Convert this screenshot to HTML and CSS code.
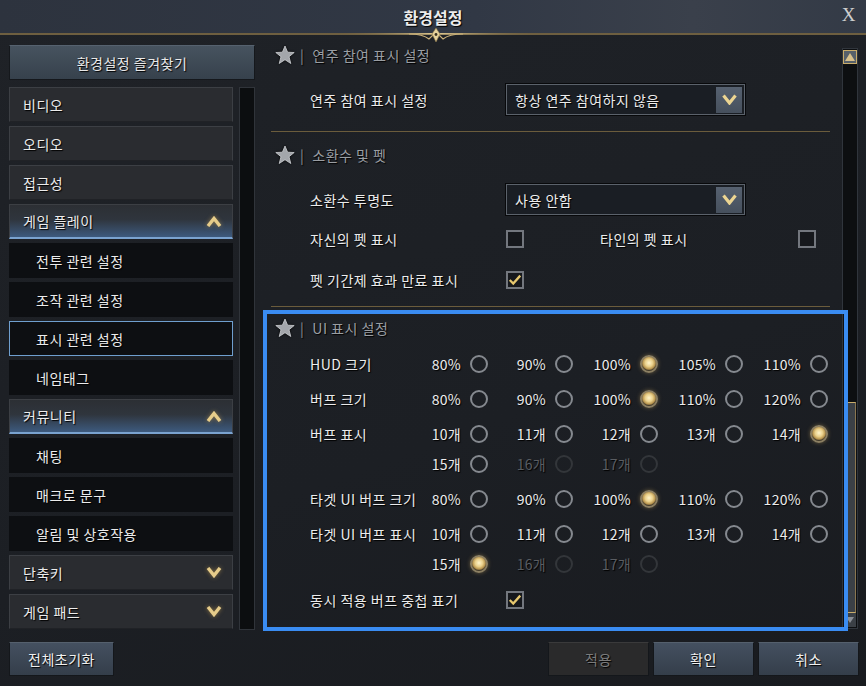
FILE: index.html
```html
<!DOCTYPE html>
<html>

<head>
    <link rel="stylesheet" href="styles.css">
    <title>환경설정</title>
</head>

<body>
    <div class="window">
        <div class="titlebar">
            <span class="title">환경설정</span>
            <span class="close">X</span>
        </div>
        <svg class="ornament" width="210" height="16" viewBox="0 0 210 16">
            <defs>
                <linearGradient id="gl" x1="0" x2="1">
                    <stop offset="0" stop-color="#6b5a38" stop-opacity="0" />
                    <stop offset="0.5" stop-color="#e2cc94" />
                    <stop offset="1" stop-color="#6b5a38" stop-opacity="0" />
                </linearGradient>
            </defs>
            <rect x="0" y="5" width="210" height="1.5" fill="url(#gl)" />
            <path d="M78 6 Q92 6 98 11 L105 4 L112 11 Q118 6 132 6" fill="none" stroke="#c9b07a" stroke-width="1.2" />
            <path d="M105 0 L109 6 L105 14 L101 6 Z" fill="#e6d29c" stroke="#8a7446" stroke-width="0.6" />
            <circle cx="105" cy="6.5" r="1.4" fill="#3a3222" />
        </svg>

        <div class="main">
            <aside class="sidebar">
                <button class="fav-btn">환경설정 즐겨찾기</button>
                <div class="nav-wrap">
                    <ul class="nav">
                        <li class="nav-item">비디오</li>
                        <li class="nav-item">오디오</li>
                        <li class="nav-item">접근성</li>
                        <li class="nav-item open">게임 플레이
                            <svg class="chev" width="16" height="11" viewBox="0 0 16 11"><polyline points="2,10 8,2.5 14,10" /></svg>
                        </li>
                        <li class="nav-sub">전투 관련 설정</li>
                        <li class="nav-sub">조작 관련 설정</li>
                        <li class="nav-sub active">표시 관련 설정</li>
                        <li class="nav-sub">네임태그</li>
                        <li class="nav-item open">커뮤니티
                            <svg class="chev" width="16" height="11" viewBox="0 0 16 11"><polyline points="2,10 8,2.5 14,10" /></svg>
                        </li>
                        <li class="nav-sub">채팅</li>
                        <li class="nav-sub">매크로 문구</li>
                        <li class="nav-sub">알림 및 상호작용</li>
                        <li class="nav-item">단축키
                            <svg class="chev" width="16" height="11" viewBox="0 0 16 11"><polyline points="2,1 8,8.5 14,1" /></svg>
                        </li>
                        <li class="nav-item">게임 패드
                            <svg class="chev" width="16" height="11" viewBox="0 0 16 11"><polyline points="2,1 8,8.5 14,1" /></svg>
                        </li>
                    </ul>
                    <div class="nav-track"></div>
                </div>
            </aside>

            <section class="content">
                <div class="panel">
                    <div class="sec-head">
                        <svg class="star" width="20" height="20" viewBox="0 0 20 20"><polygon points="10,1 12.6,7.2 19.2,7.5 14,11.7 15.8,18.5 10,14.7 4.2,18.5 6,11.7 0.8,7.5 7.4,7.2" /></svg>
                        <span class="bar">|</span> 연주 참여 표시 설정
                    </div>
                    <div class="row row-select r1">
                        <span class="label">연주 참여 표시 설정</span>
                        <div class="select">
                            <span>항상 연주 참여하지 않음</span>
                            <span class="select-btn"><svg width="15" height="11" viewBox="0 0 15 11"><polyline points="1.5,1.5 7.5,9 13.5,1.5" /></svg></span>
                        </div>
                    </div>
                    <div class="sep s1"></div>

                    <div class="sec-head h2">
                        <svg class="star" width="20" height="20" viewBox="0 0 20 20"><polygon points="10,1 12.6,7.2 19.2,7.5 14,11.7 15.8,18.5 10,14.7 4.2,18.5 6,11.7 0.8,7.5 7.4,7.2" /></svg>
                        <span class="bar">|</span> 소환수 및 펫
                    </div>
                    <div class="row row-select r1">
                        <span class="label">소환수 투명도</span>
                        <div class="select">
                            <span>사용 안함</span>
                            <span class="select-btn"><svg width="15" height="11" viewBox="0 0 15 11"><polyline points="1.5,1.5 7.5,9 13.5,1.5" /></svg></span>
                        </div>
                    </div>
                    <div class="row row-check r-pet">
                        <span class="label">자신의 펫 표시</span>
                        <span class="check"></span>
                        <span class="label other">타인의 펫 표시</span>
                        <span class="check"></span>
                    </div>
                    <div class="row row-check r-exp">
                        <span class="label">펫 기간제 효과 만료 표시</span>
                        <span class="check on"><svg width="16" height="14" viewBox="0 0 16 14"><polyline points="2,7 6,11 14,2" /></svg></span>
                    </div>
                    <div class="sep s2"></div>

                    <div class="sec-head h3">
                        <svg class="star" width="20" height="20" viewBox="0 0 20 20"><polygon points="10,1 12.6,7.2 19.2,7.5 14,11.7 15.8,18.5 10,14.7 4.2,18.5 6,11.7 0.8,7.5 7.4,7.2" /></svg>
                        <span class="bar">|</span> UI 표시 설정
                    </div>
                    <div class="opt-list">
                        <div class="opt-row">
                            <span class="label">HUD 크기</span>
                            <div class="opts">
                                <span class="opt">80%<i class="radio"></i></span>
                                <span class="opt">90%<i class="radio"></i></span>
                                <span class="opt">100%<i class="radio on"></i></span>
                                <span class="opt">105%<i class="radio"></i></span>
                                <span class="opt">110%<i class="radio"></i></span>
                            </div>
                        </div>
                        <div class="opt-row">
                            <span class="label">버프 크기</span>
                            <div class="opts">
                                <span class="opt">80%<i class="radio"></i></span>
                                <span class="opt">90%<i class="radio"></i></span>
                                <span class="opt">100%<i class="radio on"></i></span>
                                <span class="opt">110%<i class="radio"></i></span>
                                <span class="opt">120%<i class="radio"></i></span>
                            </div>
                        </div>
                        <div class="opt-row">
                            <span class="label">버프 표시</span>
                            <div class="opts">
                                <span class="opt">10개<i class="radio"></i></span>
                                <span class="opt">11개<i class="radio"></i></span>
                                <span class="opt">12개<i class="radio"></i></span>
                                <span class="opt">13개<i class="radio"></i></span>
                                <span class="opt">14개<i class="radio on"></i></span>
                                <span class="opt">15개<i class="radio"></i></span>
                                <span class="opt off">16개<i class="radio"></i></span>
                                <span class="opt off">17개<i class="radio"></i></span>
                            </div>
                        </div>
                        <div class="opt-row">
                            <span class="label">타겟 UI 버프 크기</span>
                            <div class="opts">
                                <span class="opt">80%<i class="radio"></i></span>
                                <span class="opt">90%<i class="radio"></i></span>
                                <span class="opt">100%<i class="radio on"></i></span>
                                <span class="opt">110%<i class="radio"></i></span>
                                <span class="opt">120%<i class="radio"></i></span>
                            </div>
                        </div>
                        <div class="opt-row">
                            <span class="label">타겟 UI 버프 표시</span>
                            <div class="opts">
                                <span class="opt">10개<i class="radio"></i></span>
                                <span class="opt">11개<i class="radio"></i></span>
                                <span class="opt">12개<i class="radio"></i></span>
                                <span class="opt">13개<i class="radio"></i></span>
                                <span class="opt">14개<i class="radio"></i></span>
                                <span class="opt">15개<i class="radio on"></i></span>
                                <span class="opt off">16개<i class="radio"></i></span>
                                <span class="opt off">17개<i class="radio"></i></span>
                            </div>
                        </div>
                    </div>
                    <div class="row row-check r-stack">
                        <span class="label">동시 적용 버프 중첩 표기</span>
                        <span class="check on"><svg width="16" height="14" viewBox="0 0 16 14"><polyline points="2,7 6,11 14,2" /></svg></span>
                    </div>
                </div>

                <div class="vscroll">
                    <span class="vs-up"><svg width="10" height="8" viewBox="0 0 10 8"><polygon points="5,0 10,8 0,8" /></svg></span>
                    <span class="vs-thumb"></span>
                    <span class="vs-down"><svg width="8" height="6" viewBox="0 0 8 6"><polygon points="0,0 8,0 4,6" /></svg></span>
                </div>
            </section>
        </div>

        <div class="footer">
            <button class="btn reset">전체초기화</button>
            <div class="btn-group">
                <button class="btn disabled">적용</button>
                <button class="btn">확인</button>
                <button class="btn">취소</button>
            </div>
        </div>

        <div class="highlight"></div>
    </div>
</body>

</html>
```

FILE: styles.css
```css
body {
    margin: 0;
    background: #15171b;
    font-family: "Noto Sans CJK KR", "Noto Sans", sans-serif;
    font-size: 14px;
    letter-spacing: 0.5px;
    color: #ececec;
}

.window {
    position: relative;
    width: 866px;
    height: 686px;
    overflow: hidden;
    background: linear-gradient(160deg, #1f2227 0%, #1c1f24 60%, #191b1f 100%);
}

.titlebar {
    height: 33px;
    border-bottom: 2px solid #6e5f40;
    background: linear-gradient(90deg, #2d333e 0%, #313845 55%, #3a404b 80%, #333a46 100%);
    display: flex;
    align-items: center;
    justify-content: center;
    position: relative;
}

.title {
    font-size: 16px;
    font-weight: bold;
    letter-spacing: 0;
    color: #ececec;
    text-shadow: 1px 1px 1px #000;
}

.close {
    position: absolute;
    right: 10px;
    top: 4px;
    font-family: "Liberation Serif", serif;
    font-size: 19px;
    color: #cfcfcf;
}

.ornament {
    position: absolute;
    left: 331px;
    top: 28px;
}

/* main area */
.main {
    box-sizing: border-box;
    height: 596px;
    padding: 10px 8px 0 9px;
    display: flex;
    gap: 10px;
}

.sidebar {
    width: 246px;
    display: flex;
    flex-direction: column;
}

.fav-btn {
    height: 35px;
    border: 1px solid #15181c;
    border-top-color: #56626f;
    background: linear-gradient(#47535f, #36414c);
    color: #e8e8e8;
    font-family: inherit;
    font-size: 14px;
    letter-spacing: 0.5px;
    text-shadow: 1px 1px 1px #000;
    margin-bottom: 7px;
}

.nav-wrap {
    display: flex;
    gap: 6px;
}

.nav {
    list-style: none;
    margin: 0;
    padding: 0;
    width: 224px;
}

.nav li {
    box-sizing: border-box;
    height: 35px;
    margin-bottom: 4px;
    display: flex;
    align-items: center;
    justify-content: space-between;
    text-shadow: 1px 1px 1px #000;
}

.nav li:last-child {
    margin-bottom: 0;
}

.nav-item {
    padding: 0 10px 0 13px;
    background: #2a2c30;
    border: 1px solid #3c3f44;
    border-bottom-color: #202226;
}

.nav-item.open {
    background: linear-gradient(#2c2f34 0%, #2f353d 45%, #3d5a7e 100%);
    border-bottom: 2px solid #7aa3d0;
}

.nav-sub {
    padding-left: 26px;
    background: #0d0f12;
    border: 1px solid #0d0f12;
}

.nav-sub.active {
    border-color: #6f9fcf;
}

.chev polyline {
    fill: none;
    stroke: #e6cc8a;
    stroke-width: 3.4;
    stroke-linejoin: miter;
}

.chev {
    filter: drop-shadow(0 0 2px rgba(200, 160, 80, 0.6));
}

.nav-track {
    width: 16px;
    box-sizing: border-box;
    height: 543px;
    background: #0c0e10;
    border: 1px solid #30343a;
}

/* content */
.content {
    flex: 1;
    display: flex;
    gap: 2px;
}

.panel {
    flex: 1;
    display: flex;
    flex-direction: column;
}

.sec-head {
    height: 20px;
    display: flex;
    align-items: center;
    padding-left: 10px;
    color: #9a9ea3;
    font-size: 14px;
    text-shadow: 1px 1px 1px #000;
}

.sec-head .bar {
    margin: 0 8px 0 5px;
    color: #8d9196;
}

.star polygon {
    fill: #a3a6ab;
    stroke: #cfd2d6;
    stroke-width: 0.8;
}

.star {
    filter: drop-shadow(0 0 1px #000);
}

.h2 {
    margin-top: 13px;
}

.h3 {
    margin-top: 11px;
}

.row {
    display: flex;
    align-items: center;
    padding-left: 45px;
    text-shadow: 1px 1px 1px #000;
}

.row .label {
    width: 196px;
}

.row .label.other {
    margin-left: 76px;
    width: 198px;
}

.row-select {
    height: 31px;
    margin-top: 19px;
}

.r-pet {
    height: 18px;
    margin-top: 15px;
}

.r-exp {
    height: 18px;
    margin-top: 23px;
}

.r-stack {
    height: 20px;
    margin-top: 16px;
}

.select {
    box-sizing: border-box;
    width: 239px;
    height: 31px;
    border: 1px solid #5b626b;
    outline: 1px solid #08090b;
    background: #1a1e24;
    display: flex;
    align-items: center;
    justify-content: space-between;
    padding: 0 2px 0 8px;
}

.select-btn {
    width: 26px;
    height: 26px;
    background: linear-gradient(#566170, #46505d);
    display: flex;
    align-items: center;
    justify-content: center;
}

.select-btn polyline {
    fill: none;
    stroke: #ecd592;
    stroke-width: 3.2;
}

.check {
    box-sizing: border-box;
    width: 18px;
    height: 18px;
    border: 2px solid #73777e;
    background: #16181c;
    display: flex;
    align-items: center;
    justify-content: center;
}

.check polyline {
    fill: none;
    stroke: #e7c86e;
    stroke-width: 2.6;
}

.sep {
    height: 1px;
    margin: 16px 10px 0 6px;
    background: #6b5c3c;
}

.s2 {
    margin-top: 17px;
}

.opt-list {
    display: flex;
    flex-direction: column;
    gap: 15px;
    margin-top: 16px;
    padding-left: 45px;
}

.opt-row {
    display: flex;
    text-shadow: 1px 1px 1px #000;
}

.opt-row .label {
    width: 93px;
    height: 20px;
    line-height: 20px;
    white-space: nowrap;
}

.opts {
    display: grid;
    grid-template-columns: repeat(5, 85px);
    row-gap: 10px;
}

.opt {
    height: 20px;
    display: flex;
    align-items: center;
    justify-content: flex-end;
    gap: 9px;
    letter-spacing: 0.3px;
}

.radio {
    box-sizing: border-box;
    width: 18px;
    height: 18px;
    border-radius: 50%;
    border: 2px solid #85898f;
}

.radio.on {
    border-color: #8c7f62;
    background: radial-gradient(circle at 50% 42%, #fff4cc 0%, #ead08a 35%, #b8944e 58%, #3a3326 72%, #2a2620 100%);
    box-shadow: 0 0 4px rgba(220, 180, 100, 0.4);
}

.opt.off {
    color: #5a5d62;
}

.opt.off .radio {
    border-color: #33363a;
}

/* right scrollbar */
.vscroll {
    box-sizing: border-box;
    width: 16px;
    height: 581px;
    margin-top: 3px;
    background: #0d0f11;
    border: 1px solid #30353c;
    display: flex;
    flex-direction: column;
    align-items: center;
    padding-top: 1px;
}

.vs-up {
    box-sizing: border-box;
    width: 14px;
    height: 14px;
    border: 1px solid #c9ac6a;
    background: #56606a;
    display: flex;
    align-items: center;
    justify-content: center;
}

.vs-up polygon {
    fill: #d8c08a;
}

.vs-thumb {
    box-sizing: border-box;
    width: 12px;
    height: 211px;
    margin-top: auto;
    border: 1px solid #c9ac6a;
    border-right-color: #8a7650;
    background: #3b4046;
}

.vs-down {
    width: 12px;
    height: 14px;
    margin-bottom: 1px;
    background: #3b4046;
    display: flex;
    align-items: center;
    justify-content: center;
}

.vs-down polygon {
    fill: #8a8f96;
}

/* footer */
.footer {
    display: flex;
    justify-content: space-between;
    padding: 11px 7px 0 9px;
}

.btn-group {
    display: flex;
    gap: 4px;
}

.btn {
    box-sizing: border-box;
    width: 101px;
    height: 34px;
    border: 1px solid #14171b;
    border-top-color: #55606d;
    background: linear-gradient(#445060, #343e4a);
    color: #f0f0f0;
    font-family: inherit;
    font-size: 14px;
    letter-spacing: 0.5px;
    text-shadow: 1px 1px 1px #000;
}

.btn.reset {
    width: 105px;
}

.btn.disabled {
    background: #2a2a2b;
    border-top-color: #3a3a3b;
    color: #7c7c7c;
}

/* annotation box over the UI section */
.highlight {
    position: absolute;
    left: 263px;
    top: 310px;
    width: 585px;
    height: 321px;
    box-sizing: border-box;
    border: 4px solid #3a8cf2;
    pointer-events: none;
}
```
